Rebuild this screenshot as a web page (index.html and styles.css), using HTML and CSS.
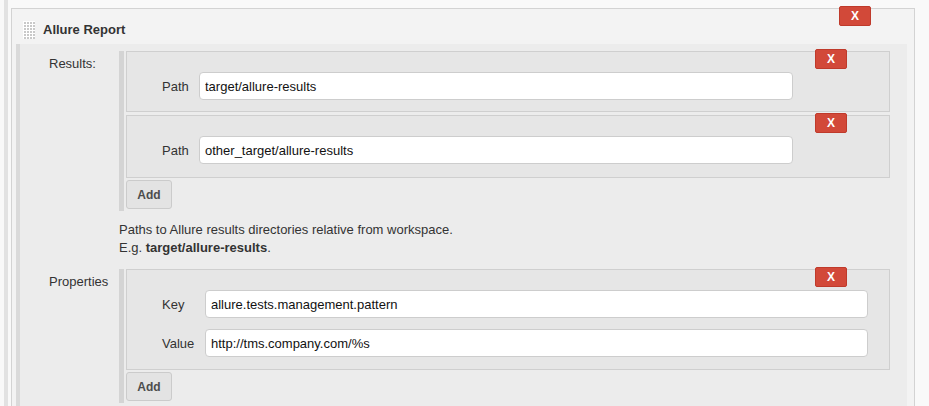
FILE: index.html
```html
<!DOCTYPE html>
<html>
<head>
<meta charset="utf-8">
<link rel="stylesheet" href="styles.css">
</head>
<body>
<div class="page">
  <div class="panel">
    <button class="del-btn">X</button>
    <div class="panel-header">
      <svg class="handle" width="12" height="18" viewBox="0 0 12 18">
        <rect width="12" height="18" fill="#fff"/>
        <g fill="#c9c9c9">
          <rect x="1" y="1" width="2" height="2"/><rect x="4" y="1" width="2" height="2"/><rect x="7" y="1" width="2" height="2"/><rect x="10" y="1" width="2" height="2"/>
          <rect x="1" y="4" width="2" height="2"/><rect x="4" y="4" width="2" height="2"/><rect x="7" y="4" width="2" height="2"/><rect x="10" y="4" width="2" height="2"/>
          <rect x="1" y="7" width="2" height="2"/><rect x="4" y="7" width="2" height="2"/><rect x="7" y="7" width="2" height="2"/><rect x="10" y="7" width="2" height="2"/>
          <rect x="1" y="10" width="2" height="2"/><rect x="4" y="10" width="2" height="2"/><rect x="7" y="10" width="2" height="2"/><rect x="10" y="10" width="2" height="2"/>
          <rect x="1" y="13" width="2" height="2"/><rect x="4" y="13" width="2" height="2"/><rect x="7" y="13" width="2" height="2"/><rect x="10" y="13" width="2" height="2"/>
          <rect x="1" y="16" width="2" height="2"/><rect x="4" y="16" width="2" height="2"/><rect x="7" y="16" width="2" height="2"/><rect x="10" y="16" width="2" height="2"/>
        </g>
      </svg>
      <span class="panel-title">Allure Report</span>
    </div>
    <div class="section">
      <div class="setting-name">Results:</div>
      <div class="repeated">
        <div class="chunk">
          <button class="del-btn">X</button>
          <div class="fields fields-path">
            <label class="field-label">Path</label>
            <input class="field-input" type="text" value="target/allure-results">
          </div>
        </div>
        <div class="chunk chunk-last">
          <button class="del-btn">X</button>
          <div class="fields fields-path">
            <label class="field-label">Path</label>
            <input class="field-input" type="text" value="other_target/allure-results">
          </div>
        </div>
        <button class="add-btn">Add</button>
      </div>

      <div class="setting-name"></div>
      <div class="help">
        Paths to Allure results directories relative from workspace.<br>
        E.g. <b>target/allure-results</b>.
      </div>

      <div class="setting-name">Properties</div>
      <div class="repeated">
        <div class="chunk chunk-props">
          <button class="del-btn">X</button>
          <div class="fields fields-props">
            <label class="field-label">Key</label>
            <input class="field-input" type="text" value="allure.tests.management.pattern">
            <label class="field-label">Value</label>
            <input class="field-input" type="text" value="http://tms.company.com/%s">
          </div>
        </div>
        <button class="add-btn">Add</button>
      </div>
    </div>
  </div>
</div>
</body>
</html>
```

FILE: styles.css
```css
* { box-sizing: border-box; }

html, body {
  margin: 0;
  padding: 0;
  background: #f9f9f9;
  font-family: "Liberation Sans", Arial, sans-serif;
  font-size: 13px;
  color: #333;
  height: 406px;
  overflow: hidden;
}

.page {
  margin-left: 4px;
  border-left: 4px solid #e2e2e2;
  padding: 8px 0 0 3px;
  height: 406px;
  width: 911px;
}

.panel {
  position: relative;
  width: 904px;
  height: 398px;
  background: #f3f3f3;
  border: 1px solid #d3d3d3;
  border-bottom: none;
  padding: 0 7px 0 4px;
  display: flex;
  flex-direction: column;
}

.panel-header {
  display: flex;
  align-items: flex-start;
  height: 35px;
  flex: none;
  padding: 12px 0 0 7px;
}

.handle {
  display: block;
  margin-right: 8px;
}

.panel-title {
  font-weight: bold;
  line-height: 18px;
  color: #333;
}

.section {
  flex: 1;
  min-height: 0;
  overflow: hidden;
  background: #ececec;
  border-left: 4px solid #dadada;
  padding-top: 7px;
  display: grid;
  grid-template-columns: 99px 771px;
  align-content: start;
}

.setting-name {
  padding: 4px 0 0 29px;
  line-height: 18px;
  color: #333;
}

.repeated {
  border-left: 5px solid #d4d4d4;
  padding: 0 0 2px 2px;
}

.chunk {
  position: relative;
  background: #e6e6e6;
  border: 1px solid #cfcfcf;
  padding: 20px 0 11px 35px;
}

.chunk + .chunk { margin-top: 3px; }
.chunk-last { padding-bottom: 13px; }
.chunk-props { padding-bottom: 12px; }

.fields {
  display: grid;
  align-items: center;
  column-gap: 11px;
  row-gap: 11px;
}

.fields-path { grid-template-columns: 26px 594px; }
.fields-props { grid-template-columns: 32px 663px; }

.field-label {
  color: #333;
  white-space: nowrap;
}

.field-input {
  height: 28px;
  border: 1px solid #cdcdcd;
  border-radius: 4px;
  background: #fff;
  padding: 0 5px;
  font-family: "Liberation Sans", Arial, sans-serif;
  font-size: 13px;
  color: #111;
  margin: 0;
}

.del-btn {
  position: absolute;
  top: -3px;
  right: 42px;
  width: 32px;
  height: 20px;
  padding: 0;
  margin: 0;
  background: #d24939;
  border: 1px solid #bf3a2b;
  border-radius: 2px;
  color: #fff;
  font-family: "Liberation Sans", Arial, sans-serif;
  font-weight: bold;
  font-size: 12px;
  line-height: 18px;
  text-align: center;
}

.panel > .del-btn { right: 43px; }

.add-btn {
  display: block;
  margin-top: 2px;
  width: 46px;
  height: 29px;
  padding: 0;
  background: #e3e3e3;
  border: 1px solid #cbcbcb;
  border-radius: 3px;
  font-family: "Liberation Sans", Arial, sans-serif;
  font-weight: bold;
  font-size: 12px;
  color: #4d4d4d;
}

.help {
  padding: 10px 0 12px 0;
  line-height: 18px;
  color: #333;
}

.help b { color: #333; }
```
